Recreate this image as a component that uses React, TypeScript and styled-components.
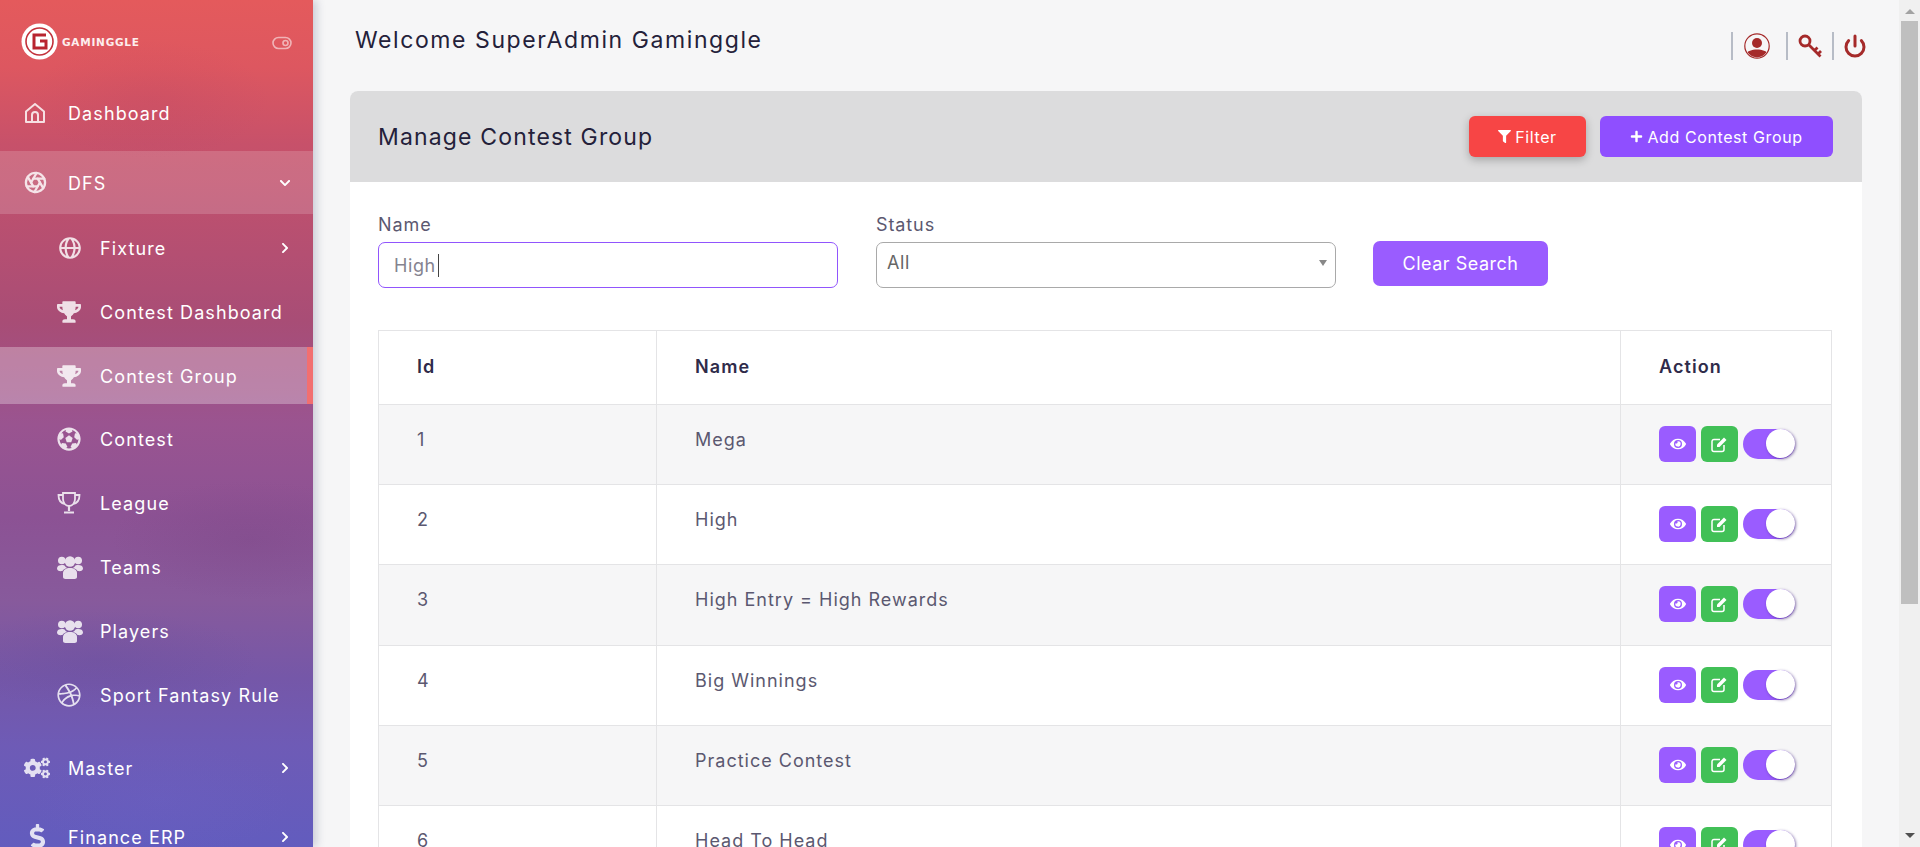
import React from "react";
import styled, { createGlobalStyle } from "styled-components";
import { FaTrophy, FaFutbol, FaCogs, FaDollarSign, FaEye, FaFilter, FaPlus, FaDribbble, FaChevronRight, FaChevronDown } from "react-icons/fa";
import { LuAperture } from "react-icons/lu";
import { BiGlobe } from "react-icons/bi";
import { FiPower } from "react-icons/fi";

const FONT = `"Inter", "Open Sans", "Liberation Sans", sans-serif`;

const Global = createGlobalStyle`
  body { margin: 0; font-family: ${FONT}; background: #f6f6f7; color: #5b5870; }
  * { box-sizing: border-box; }
`;

const Page = styled.div`
  display: flex;
  align-items: flex-start;
  min-height: 1174px;
`;

const ScrollRail = styled.div`
  position: fixed;
  top: 0;
  right: 0;
  bottom: 0;
  width: 21px;
  background: #f0f0f0;
  display: flex;
  flex-direction: column;
  align-items: center;
  justify-content: space-between;
`;

const ScrollGroup = styled.div`
  display: flex;
  flex-direction: column;
  align-items: center;
  width: 100%;
`;

const ArrowUp = styled.span`
  margin: 9px 0 7px;
  border-left: 5px solid transparent;
  border-right: 5px solid transparent;
  border-bottom: 5px solid #a3a3a3;
`;

const ArrowDown = styled.span`
  margin-bottom: 9px;
  border-left: 5px solid transparent;
  border-right: 5px solid transparent;
  border-top: 5px solid #505050;
`;

const ScrollThumb = styled.div`
  width: 17px;
  height: 583px;
  background: #bfbfbf;
`;

const Sidebar = styled.aside`
  position: sticky;
  top: 0;
  flex: 0 0 313px;
  height: 100vh;
  overflow: hidden;
  color: #fff;
  box-shadow: 4px 0 8px rgba(60, 70, 110, 0.22);
  background:
    radial-gradient(ellipse 120px 60px at 150px 100px, rgba(170, 60, 100, 0.14), transparent),
    radial-gradient(ellipse 160px 50px at 100px 660px, rgba(90, 70, 150, 0.2), transparent),
    radial-gradient(ellipse 140px 60px at 250px 540px, rgba(110, 60, 120, 0.2), transparent),
    radial-gradient(ellipse 130px 60px at 160px 800px, rgba(110, 100, 200, 0.2), transparent),
    linear-gradient(180deg, #e45a5c 0%, #dd5760 8%, #c7516a 17%, #b44f72 30%, #a84d76 38%, #9a5490 50%, #8c5294 61%, #875a9c 71%, #7557a8 80%, #6e5bb6 88%, #625cbe 100%);
`;

const Brand = styled.div`
  height: 82px;
  display: flex;
  align-items: flex-start;
  padding: 23px 21px 0 21px;
  justify-content: space-between;
`;

const Logo = styled.div`
  display: flex;
  align-items: center;
  gap: 4px;
`;

const LogoText = styled.span`
  font-family: "DejaVu Sans", ${FONT};
  font-size: 10.5px;
  font-weight: 700;
  letter-spacing: 0.75px;
  color: #fdeeee;
`;

const CollapseToggle = styled.svg`
  width: 20px;
  height: 14px;
  margin-top: 13px;
  opacity: 0.55;
`;

const NavItem = styled.div<{ $open?: boolean }>`
  height: ${(p) => (p.$open ? 63 : 62)}px;
  display: flex;
  align-items: center;
  padding: 0 22px 0 24px;
  font-size: 18px;
  font-weight: 400;
  letter-spacing: 1.1px;
  background: ${(p) => (p.$open ? "rgba(255,255,255,0.16)" : "transparent")};
  margin-bottom: 7px;
`;

const NavIcon = styled.span`
  flex: 0 0 44px;
  display: flex;
  align-items: center;
  opacity: 0.82;
`;

const NavLabel = styled.span`
  flex: 1;
  padding-top: 1px;
`;

const Chevron = styled.span`
  display: flex;
  font-size: 12px;
`;

const SubList = styled.div`
  display: flex;
  flex-direction: column;
  gap: 6.8px;
  margin-top: -1.5px;
  margin-bottom: 14px;
`;

const SubItem = styled.div<{ $active?: boolean }>`
  height: 57px;
  display: flex;
  align-items: center;
  padding: 0 22px 0 57px;
  font-size: 18px;
  font-weight: 400;
  letter-spacing: 1.1px;
  white-space: nowrap;
  background: ${(p) => (p.$active ? "rgba(255,255,255,0.29)" : "transparent")};
  border-right: ${(p) => (p.$active ? "6px solid #f26f70" : "0")};
`;

const SubIcon = styled.span`
  flex: 0 0 43px;
  display: flex;
  align-items: center;
  font-size: 24px;
  opacity: 0.82;
`;

const Main = styled.main`
  flex: 1;
  min-width: 0;
  padding: 0 58px 0 37px;
`;

const TopBar = styled.header`
  height: 91px;
  display: flex;
  justify-content: space-between;
  align-items: flex-start;
  padding-left: 5px;
  margin-right: -5px;
`;

const Welcome = styled.h1`
  margin: 26px 0 0;
  font-size: 23px;
  line-height: 28px;
  font-weight: 400;
  letter-spacing: 1.58px;
  color: #24213a;
`;

const TopIcons = styled.div`
  display: flex;
  align-items: center;
  margin-top: 32px;
  height: 28px;
`;

const TopDivider = styled.span<{ $gap: number }>`
  width: 2px;
  height: 28px;
  background: #b7bcc6;
  margin-right: ${(p) => p.$gap}px;
`;

const TopIcon = styled.span<{ $gap: number }>`
  display: flex;
  color: #a52a2a;
  margin-right: ${(p) => p.$gap}px;
`;

const Card = styled.section`
  border-radius: 8px;
  background: #fff;
  min-height: 1083px;
  overflow: hidden;
`;

const CardHead = styled.div`
  height: 91px;
  background: #dcdcdd;
  display: flex;
  align-items: center;
  justify-content: space-between;
  padding: 0 29px 0 28px;
`;

const CardTitle = styled.h2`
  margin: 0;
  font-size: 23px;
  font-weight: 400;
  letter-spacing: 1.16px;
  color: #24213a;
`;

const HeadActions = styled.div`
  display: flex;
  gap: 14px;
`;

const HeadButton = styled.button<{ $bg: string; $w: number; $shadow?: boolean }>`
  width: ${(p) => p.$w}px;
  height: 41px;
  border: 0;
  border-radius: 6px;
  background: ${(p) => p.$bg};
  color: #fff;
  font-family: ${FONT};
  font-size: 16px;
  font-weight: 400;
  letter-spacing: 0.6px;
  display: inline-flex;
  align-items: center;
  justify-content: center;
  gap: 4px;
  box-shadow: ${(p) => (p.$shadow ? "0 3px 8px rgba(0,0,0,0.25)" : "none")};
  svg { font-size: 13px; }
`;

const CardBody = styled.div`
  padding: 30px 30px 30px 28px;
`;

const Filters = styled.div`
  display: flex;
  align-items: flex-start;
  height: 118px;
`;

const Field = styled.div`
  width: 460px;
  margin-right: 38px;
  position: relative;
  & + & { margin-right: 37px; }
`;

const FieldLabel = styled.label`
  display: block;
  font-size: 18px;
  line-height: 22px;
  padding-top: 2px;
  height: 30px;
  letter-spacing: 0.9px;
  color: #5b5870;
`;

const TextInput = styled.input`
  display: block;
  width: 100%;
  height: 46px;
  border: 1px solid #9155fd;
  border-radius: 7px;
  outline: 0;
  padding: 0 15px;
  font-family: ${FONT};
  font-size: 18px;
  letter-spacing: 0.6px;
  color: #85838f;
  background: #fff;
`;

const Caret = styled.span`
  position: absolute;
  left: 60px;
  top: 42px;
  width: 1px;
  height: 23px;
  background: #444;
`;

const SelectWrap = styled.div`
  position: relative;
  &::after {
    content: "";
    position: absolute;
    right: 9px;
    top: 18px;
    border-left: 4.5px solid transparent;
    border-right: 4.5px solid transparent;
    border-top: 6px solid #888;
  }
`;

const StatusSelect = styled.select`
  display: block;
  appearance: none;
  width: 100%;
  height: 46px;
  border: 1px solid #a9a9a9;
  border-radius: 7px;
  padding: 0 10px 5px;
  font-family: ${FONT};
  font-size: 18px;
  letter-spacing: 0.6px;
  color: #666;
  background: #fff;
`;

const ClearButton = styled.button`
  width: 175px;
  height: 45px;
  margin-top: 29px;
  border: 0;
  border-radius: 7px;
  background: #9a5cff;
  color: #fff;
  font-family: ${FONT};
  font-size: 18px;
  font-weight: 400;
  letter-spacing: 0.5px;
`;

const Table = styled.table`
  width: 100%;
  border-collapse: collapse;
  table-layout: fixed;
  font-size: 18px;
`;

const Th = styled.th<{ $w?: number }>`
  ${(p) => (p.$w ? `width: ${p.$w}px;` : "")}
  height: 74px;
  padding: 0 38px 2px;
  text-align: left;
  border: 1px solid #e4e4e6;
  font-weight: 600;
  font-size: 18px;
  letter-spacing: 1.1px;
  color: #2f2b4a;
`;

const Row = styled.tr<{ $odd: boolean }>`
  background: ${(p) => (p.$odd ? "#f6f6f7" : "#fff")};
`;

const Td = styled.td`
  height: 80.2px;
  padding: 20px 38px 0;
  vertical-align: top;
  border: 1px solid #e4e4e6;
  line-height: 30px;
  letter-spacing: 1px;
  color: #5b5870;
`;

const ActionCell = styled(Td)`
  padding: 21px 0 0 38px;
`;

const Actions = styled.div`
  display: flex;
  align-items: center;
  gap: 5px;
`;

const IconButton = styled.span<{ $bg: string }>`
  width: 37px;
  height: 36px;
  border-radius: 6px;
  background: ${(p) => p.$bg};
  color: #fff;
  display: flex;
  align-items: center;
  justify-content: center;
  font-size: 16px;
`;

const Switch = styled.span`
  width: 52px;
  height: 30px;
  border-radius: 15px;
  background: #9a5cff;
  display: flex;
  justify-content: flex-end;
`;

const Knob = styled.span`
  width: 29px;
  height: 29px;
  border-radius: 50%;
  background: #fff;
  box-shadow: 1px 1px 3px rgba(60, 30, 120, 0.6);
`;

const HomeIcon = () => (
  <svg width="22" height="22" viewBox="0 0 22 22" fill="none" stroke="currentColor" strokeWidth="2" strokeLinejoin="round">
    <path d="M2 9.500 11 2l9 7.500V20H2z" />
    <path d="M8 20v-7a3 3 0 0 1 6 0v7" />
  </svg>
);

const BrandMark = () => (
  <svg width="37" height="37" viewBox="0 0 37 37">
    <circle cx="18.500" cy="18.500" r="18" fill="#fff" />
    <circle cx="18.500" cy="18.500" r="13.500" fill="none" stroke="#c2303a" strokeWidth="1.600" />
    <path d="M25 12h-12v13h12v-7h-6" fill="none" stroke="#b8242f" strokeWidth="3" />
  </svg>
);

const UserIcon = () => (
  <svg width="26" height="26" viewBox="0 0 26 26">
    <defs>
      <clipPath id="userRing"><circle cx="13" cy="13" r="11.200" /></clipPath>
    </defs>
    <circle cx="13" cy="13" r="12.200" fill="none" stroke="currentColor" strokeWidth="1.200" />
    <circle cx="13" cy="10" r="5" fill="currentColor" />
    <path clipPath="url(#userRing)" d="M2 26v-5c1-3 6-4.500 11-4.500s10 1.500 11 4.500v5z" fill="currentColor" />
  </svg>
);

const KeyIcon = () => (
  <svg width="25" height="25" viewBox="0 0 25 25" fill="none" stroke="currentColor" strokeWidth="2.800">
    <circle cx="7" cy="7" r="5" />
    <path d="M10.500 10.500 22.500 22.500M16.500 16.500l3-3M20 20l3-3" />
  </svg>
);

const ToggleIcon = () => (
  <CollapseToggle viewBox="0 0 20 14" fill="none" stroke="#fff" strokeWidth="1.600">
    <rect x="1" y="1.500" width="18" height="11" rx="5.500" />
    <circle cx="13.500" cy="7" r="2.500" />
  </CollapseToggle>
);

const LeagueIcon = () => (
  <svg width="24" height="24" viewBox="0 0 24 24" fill="none" stroke="currentColor" strokeWidth="1.800">
    <path d="M6 2h12v6c0 4-2.500 7-6 7s-6-3-6-7z" />
    <path d="M6 4H1.500c0 5 2 8 6 9M18 4h4.500c0 5-2 8-6 9" />
    <path d="M12 15v5M7 21.500h10" strokeWidth="2.200" />
  </svg>
);

const TeamIcon = () => (
  <svg width="26" height="24" viewBox="0 0 26 24" fill="currentColor">
    <circle cx="4.800" cy="5.500" r="3.800" />
    <circle cx="21.200" cy="5.500" r="3.800" />
    <circle cx="13" cy="6.500" r="5.200" />
    <path d="M0 13.500c0-2.500 2-3.500 5-3.500 1.500 0 2.500.4 3 1 .5 1 1.500 1.500 2 2-2 .5-4 1.500-4.500 3C2 16.500 0 15.500 0 13.500z" />
    <path d="M26 13.500c0-2.500-2-3.500-5-3.500-1.500 0-2.500.4-3 1-.5 1-1.500 1.500-2 2 2 .5 4 1.500 4.500 3 3.500.5 5.500-.5 5.500-2.500z" />
    <path d="M6 18c0-3 3-5 7-5s7 2 7 5v4c0 1.300-1 2-2.500 2h-9C7 24 6 23.300 6 22z" />
  </svg>
);

const EditIcon = () => (
  <svg width="17" height="17" viewBox="0 0 17 17">
    <path d="M13 9v4.500a2 2 0 0 1-2 2H3a2 2 0 0 1-2-2v-8a2 2 0 0 1 2-2h6" fill="none" stroke="currentColor" strokeWidth="1.500" />
    <path d="M6 8.500 13 1.500 15.500 4 8.500 11H6z" fill="currentColor" />
  </svg>
);

const subItems = [
  { label: "Fixture", icon: <BiGlobe size={26} />, chevron: true },
  { label: "Contest Dashboard", icon: <FaTrophy /> },
  { label: "Contest Group", icon: <FaTrophy />, active: true },
  { label: "Contest", icon: <FaFutbol /> },
  { label: "League", icon: <LeagueIcon /> },
  { label: "Teams", icon: <TeamIcon /> },
  { label: "Players", icon: <TeamIcon /> },
  { label: "Sport Fantasy Rule", icon: <FaDribbble /> },
];

const rows = ["Mega", "High", "High Entry = High Rewards", "Big Winnings", "Practice Contest", "Head To Head"];

export default function App() {
  return (
    <Page>
      <Global />
      <Sidebar>
        <Brand>
          <Logo>
            <BrandMark />
            <LogoText>GAMINGGLE</LogoText>
          </Logo>
          <ToggleIcon />
        </Brand>
        <NavItem>
          <NavIcon><HomeIcon /></NavIcon>
          <NavLabel>Dashboard</NavLabel>
        </NavItem>
        <NavItem $open>
          <NavIcon><LuAperture size={23} strokeWidth={2.4} /></NavIcon>
          <NavLabel>DFS</NavLabel>
          <Chevron><FaChevronDown /></Chevron>
        </NavItem>
        <SubList>
          {subItems.map((s) => (
            <SubItem key={s.label} $active={s.active}>
              <SubIcon>{s.icon}</SubIcon>
              <NavLabel>{s.label}</NavLabel>
              {s.chevron && <Chevron><FaChevronRight /></Chevron>}
            </SubItem>
          ))}
        </SubList>
        <NavItem>
          <NavIcon><FaCogs size={26} /></NavIcon>
          <NavLabel>Master</NavLabel>
          <Chevron><FaChevronRight /></Chevron>
        </NavItem>
        <NavItem>
          <NavIcon><FaDollarSign size={27} /></NavIcon>
          <NavLabel>Finance ERP</NavLabel>
          <Chevron><FaChevronRight /></Chevron>
        </NavItem>
      </Sidebar>
      <Main>
        <TopBar>
          <Welcome>Welcome SuperAdmin Gaminggle</Welcome>
          <TopIcons>
            <TopDivider $gap={11} />
            <TopIcon $gap={16}><UserIcon /></TopIcon>
            <TopDivider $gap={10} />
            <TopIcon $gap={9}><KeyIcon /></TopIcon>
            <TopDivider $gap={9} />
            <TopIcon $gap={0}><FiPower size={24} strokeWidth={3} /></TopIcon>
          </TopIcons>
        </TopBar>
        <Card>
          <CardHead>
            <CardTitle>Manage Contest Group</CardTitle>
            <HeadActions>
              <HeadButton $bg="#f74545" $w={117} $shadow><FaFilter />Filter</HeadButton>
              <HeadButton $bg="#8f4fff" $w={233}><FaPlus />Add Contest Group</HeadButton>
            </HeadActions>
          </CardHead>
          <CardBody>
            <Filters>
              <Field>
                <FieldLabel>Name</FieldLabel>
                <TextInput value="High" readOnly />
                <Caret />
              </Field>
              <Field>
                <FieldLabel>Status</FieldLabel>
                <SelectWrap>
                  <StatusSelect defaultValue="All">
                    <option>All</option>
                  </StatusSelect>
                </SelectWrap>
              </Field>
              <ClearButton>Clear Search</ClearButton>
            </Filters>
            <Table>
              <thead>
                <tr>
                  <Th $w={278}>Id</Th>
                  <Th>Name</Th>
                  <Th $w={211}>Action</Th>
                </tr>
              </thead>
              <tbody>
                {rows.map((name, i) => (
                  <Row key={name} $odd={i % 2 === 0}>
                    <Td>{i + 1}</Td>
                    <Td>{name}</Td>
                    <ActionCell>
                      <Actions>
                        <IconButton $bg="#9a5cff"><FaEye /></IconButton>
                        <IconButton $bg="#41c057"><EditIcon /></IconButton>
                        <Switch><Knob /></Switch>
                      </Actions>
                    </ActionCell>
                  </Row>
                ))}
              </tbody>
            </Table>
          </CardBody>
        </Card>
      </Main>
      <ScrollRail>
        <ScrollGroup>
          <ArrowUp />
          <ScrollThumb />
        </ScrollGroup>
        <ArrowDown />
      </ScrollRail>
    </Page>
  );
}
